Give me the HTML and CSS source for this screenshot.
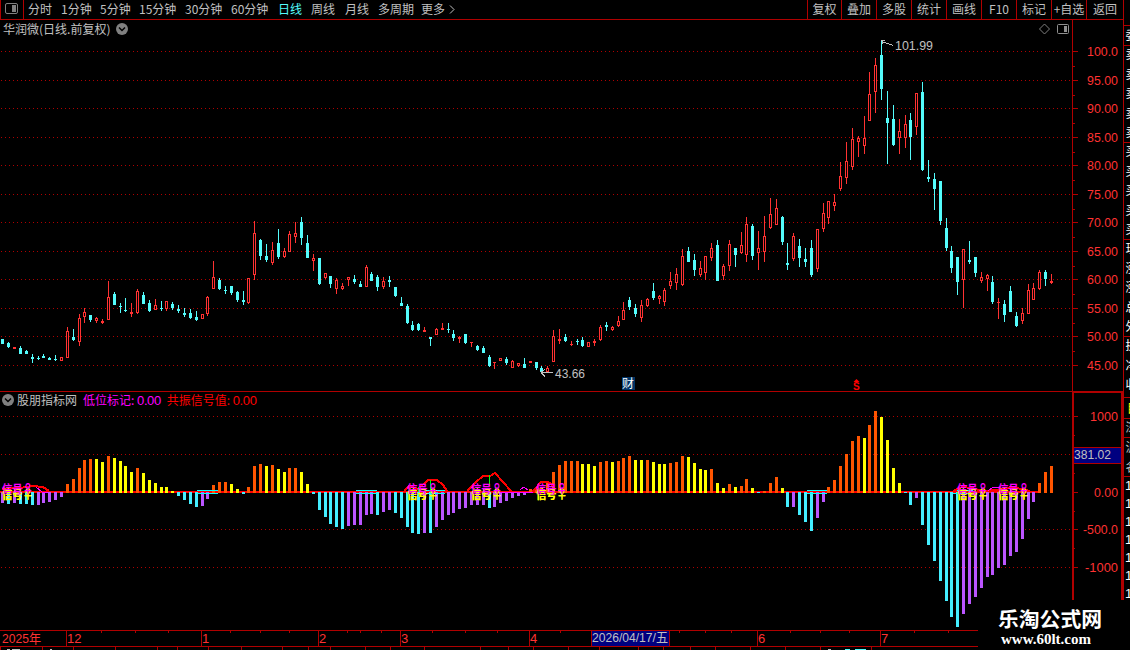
FILE: index.html
```
<!doctype html>
<html lang="zh">
<head>
	<meta charset="utf-8">
	<title>华润微 日线</title>
	<link rel="stylesheet" href="styles.css">
</head>
<body>
<div class="app">
	<div class="main">
		<!-- top toolbar -->
		<div class="toolbar">
			<div class="side-toggle">
				<svg width="13" height="11" viewBox="0 0 13 11"><rect x=".5" y=".5" width="12" height="10" rx="1.5" fill="none" stroke="#808080"/><rect x="7" y="2" width="4" height="7" fill="#808080"/></svg>
			</div>
			<div class="periods">
				<span>分时</span><span>1分钟</span><span>5分钟</span><span>15分钟</span><span>30分钟</span><span>60分钟</span><span class="active">日线</span><span>周线</span><span>月线</span><span>多周期</span><span>更多<svg class="more" width="6" height="9" viewBox="0 0 6 9"><path d="M1 .5l4 4-4 4" fill="none" stroke="#c0c0c0"/></svg></span>
			</div>
			<div class="tools">
				<span>复权</span><span>叠加</span><span>多股</span><span>统计</span><span>画线</span><span>F10</span><span>标记</span><span>+自选</span><span>返回</span>
			</div>
		</div>

		<!-- price chart -->
		<div class="panel price">
			<div class="plot">
				<div class="title">
					<span>华润微(日线.前复权)</span>
					<svg class="drop" width="12" height="12" viewBox="0 0 12 12"><circle cx="6" cy="6" r="6" fill="#808080"/><path d="M3 4.5l3 3 3-3" fill="none" stroke="#000" stroke-width="1.5"/></svg>
					<svg class="corner" width="32" height="12" viewBox="0 0 32 12"><path d="M6.500 1l5 5-5 5-5-5z" fill="none" stroke="#808080"/><rect x="19.500" y="1.500" width="11" height="9" rx="1" fill="none" stroke="#909090"/><rect x="26" y="3" width="3" height="6" fill="#909090"/></svg>
				</div>
				<svg id="price" width="1072" height="351" viewBox="0 40 1072 351"></svg>
			</div>
			<svg id="priceAxis" class="axis" width="51" height="371" viewBox="1072 20 51 371"></svg>
		</div>

		<!-- indicator -->
		<div class="panel indicator">
			<div class="plot">
				<div class="title">
					<svg class="dot" width="12" height="12" viewBox="0 0 12 12"><circle cx="6" cy="6" r="6" fill="#808080"/><path d="M3 4.500l3 3 3-3" fill="none" stroke="#000" stroke-width="1.5"/></svg>
					<span class="name">股朋指标网</span>
					<span class="low">低位标记: <b>0.00</b></span>
					<span class="res">共振信号值: <b>0.00</b></span>
				</div>
				<svg id="macd" width="1072" height="221" viewBox="0 409 1072 221"></svg>
			</div>
			<svg id="macdAxis" class="axis" width="51" height="239" viewBox="1072 391 51 239"></svg>
		</div>

		<svg id="dates" width="1123" height="20" viewBox="0 630 1123 20"></svg>
	</div>
	<svg id="quotes" class="quotes" width="7" height="650" viewBox="1123 0 7 650"></svg>
	<div class="watermark">
		<div class="site">乐淘公式网</div>
		<div class="url">www.60lt.com</div>
	</div>
</div>
<script src="chart.js"></script>
</body>
</html>
```
FILE: styles.css
```
body {
	margin: 0;
	background: #000;
	color: #c0c0c0;
	font-family: "Noto Sans CJK SC", "Liberation Sans", sans-serif;
	font-size: 12px;
	overflow: hidden;
}
svg { display: block; }
.app {
	position: relative;
	display: flex;
	width: 1130px;
	height: 650px;
	overflow: hidden;
}
.main { width: 1123px; }

/* toolbar */
.toolbar {
	display: flex;
	height: 19px;
	line-height: 18px;
	border-bottom: 1px solid #b00000;
	white-space: nowrap;
}
.side-toggle {
	box-sizing: border-box;
	width: 24px;
	padding: 3px 0 0 4px;
	border-left: 1px solid #b00000;
	border-right: 1px solid #b00000;
}
.periods {
	display: grid;
	grid-template-columns: 33px 39px 39px 46px 46px 47px 33px 34px 33px 43px 40px;
	padding-left: 4px;
}
.periods .active { color: #54fcfc; }
.more { display: inline-block; margin-left: 4px; }
.tools {
	display: grid;
	grid-template-columns: 34px 35px 35px 35px 35px 35px 35px 35px 37px;
	margin-left: auto;
	text-align: center;
}
.tools span { border-left: 1px solid #b00000; }

/* chart panels */
.panel { display: flex; }
.price { height: 371px; }
.indicator { height: 239px; }
.plot { width: 1072px; }
.title {
	display: flex;
	align-items: center;
	box-sizing: border-box;
	line-height: 16px;
	white-space: nowrap;
}
.price .title { height: 20px; padding: 0 2px 2px 3px; }
.drop { margin-left: 6px; }
.corner { margin-left: auto; }
.indicator .title {
	height: 18px;
	padding: 0 0 1px 2px;
	border-top: 1px solid #b00000;
}
.title .name { margin-left: 3px; }
.title b { font: 13px/14px "Liberation Sans", sans-serif; letter-spacing: -.4px; }
.low { margin-left: 6px; color: #f0f; }
.res { margin-left: 6px; color: #f00; }

svg text {
	font-family: "Liberation Sans", "Noto Sans CJK SC", sans-serif;
	font-size: 13px;
	fill: #c0c0c0;
}
svg .red { fill: #ff3232; }
svg .cjk { font-family: "Noto Sans CJK SC", sans-serif; font-size: 12px; }
svg .sig { font-family: "Noto Sans CJK SC", sans-serif; font-size: 12px; font-weight: bold; }
svg .magenta { fill: #f0f; }
svg .yellow { fill: #ff0; }
svg .white { fill: #fff; }
svg .mark { font-size: 10px; font-weight: bold; fill: #f00; }

.watermark {
	position: absolute;
	left: 978px;
	top: 600px;
	width: 152px;
	height: 50px;
	background: #000;
	color: #fff;
}
.site {
	padding: 4px 0 0 20px;
	font-size: 20.8px;
	font-weight: bold;
	line-height: 28px;
}
.url {
	padding-left: 23px;
	font: bold 15px/15px "Liberation Serif", serif;
}
```
FILE: chart.js
```
var RED = '#ff3232', CYAN = '#54fcfc', LINE = '#b00000';

// high, body top, body bottom, low, 1 = up
var candles = [
[339,339,344,344,0],[342,343,347,348,0],[347,347,349,349,1],[346,348,354,354,0],[350,351,354,354,0],
[354,357,359,363,0],[356,358,359,360,0],[354,356,358,358,0],[357,358,360,360,0],[355,359,360,361,0],
[357,357,361,361,1],[327,331,358,358,1],[329,337,340,341,0],[314,318,342,346,1],[308,312,317,323,1],
[315,315,320,322,0],[317,318,321,323,1],[319,321,323,324,1],[281,297,320,320,1],[292,294,305,305,0],
[303,306,307,313,0],[298,310,311,312,0],[303,312,314,317,1],[289,291,313,314,1],[292,295,304,304,0],
[300,303,311,312,0],[299,305,310,310,1],[301,308,309,311,0],[301,301,309,311,1],[302,304,308,310,0],
[305,309,311,313,0],[308,313,315,317,0],[309,313,318,319,0],[311,317,320,321,0],[314,314,319,319,1],
[296,297,314,316,1],[261,277,289,289,1],[278,280,289,290,0],[286,290,291,294,0],[286,286,293,295,0],
[291,292,300,302,0],[291,300,302,305,0],[278,278,303,304,1],[221,233,275,280,1],[239,240,256,260,0],
[244,256,260,262,0],[242,250,263,265,1],[229,243,257,259,0],[248,251,257,258,1],[231,234,252,252,1],
[222,233,237,243,1],[217,222,238,245,0],[235,243,258,258,0],[254,258,261,271,1],[258,258,284,285,0],
[273,273,278,279,1],[276,276,284,288,0],[278,280,289,294,1],[283,286,289,290,1],[277,277,280,286,1],
[275,279,282,284,0],[281,284,287,287,0],[265,267,287,287,1],[272,274,281,281,0],[275,277,287,291,0],
[277,281,287,289,1],[276,280,282,287,0],[287,287,296,297,0],[297,303,306,306,0],[304,306,323,324,0],
[321,325,330,331,0],[323,324,330,331,0],[327,330,332,332,1],[337,337,339,346,0],[328,329,335,335,1],
[323,328,330,330,1],[323,329,330,333,0],[330,334,338,341,0],[336,337,339,343,1],[334,334,343,344,0],
[342,342,343,347,1],[345,346,350,351,0],[346,348,353,353,0],[355,357,366,367,0],[362,362,363,369,1],
[358,358,361,361,1],[357,359,363,365,0],[360,361,368,368,1],[363,363,366,367,1],[358,364,368,368,0],
[361,361,363,363,1],[362,362,368,370,0],[366,368,372,372,0],[366,368,372,372,1],[330,336,362,362,1],
[329,339,341,344,1],[334,337,341,342,0],[341,344,345,346,1],[339,341,342,345,0],[337,340,346,347,0],
[342,342,347,347,1],[339,341,343,346,1],[325,327,340,341,1],[322,325,327,331,0],[326,327,330,331,1],
[316,321,326,327,1],[302,310,320,320,1],[297,300,307,310,0],[304,308,314,317,0],[300,305,318,322,1],
[298,299,306,307,1],[283,291,298,300,0],[295,296,299,304,1],[288,290,302,306,1],[272,281,286,289,1],
[268,274,283,290,1],[249,256,285,286,1],[247,251,262,262,0],[254,260,270,276,0],[261,268,275,277,1],
[256,256,273,280,1],[243,248,258,261,1],[240,245,281,281,0],[264,266,276,280,1],[240,244,266,271,1],
[248,248,255,267,0],[232,245,253,254,1],[217,224,255,262,1],[224,226,256,260,0],[231,248,253,270,1],
[216,236,252,262,1],[198,214,228,229,1],[199,208,225,225,1],[216,217,242,245,0],[243,263,265,270,0],
[233,236,259,261,1],[239,246,258,267,0],[248,259,262,267,0],[240,248,275,277,0],[229,229,269,272,1],
[203,213,229,232,1],[201,201,218,224,1],[194,202,206,211,1],[162,176,189,191,1],[142,161,178,184,1],
[128,139,167,170,1],[136,138,142,157,1],[116,138,146,154,1],[72,94,121,121,1],[58,65,92,113,1],
[40,55,89,100,0],[91,118,123,164,0],[105,119,145,146,0],[119,131,138,154,1],[115,124,138,148,1],
[113,120,137,160,0],[93,93,127,135,1],[82,92,170,171,0],[160,177,179,182,0],[173,179,189,210,0],
[181,181,221,225,0],[218,228,248,251,0],[246,251,268,273,0],[257,257,282,295,0],[249,249,280,308,1],
[241,260,262,264,0],[257,257,273,277,0],[272,277,281,283,1],[274,275,279,291,1],[276,282,302,304,0],
[298,302,303,319,1],[300,304,315,322,0],[286,291,312,312,0],[312,316,326,327,0],[308,313,321,324,1],
[284,290,314,314,1],[283,288,300,300,1],[270,272,289,290,1],[270,272,279,286,0],[274,281,283,284,1]
];

// histogram: colour letter + end of the bar
var bars = ('p503 c504 p503 c504 c504 c505 p505 p503 p502 p500 p497 o484 o479 o468 o460 o459 y459 y462 o456 y458 ' +
'y461 y466 y472 o468 y473 y480 y483 y487 y487 y491 c496 c500 c504 c507 p506 p499 o485 o482 o482 y484 ' +
'y489 c494 o487 o466 o464 y466 o465 y469 y472 o468 o468 y472 y484 c494 c510 c517 c524 c527 c529 p526 ' +
'p525 p525 p515 p514 c515 p512 p510 c513 c518 c527 c533 c534 p533 c533 p527 p520 p515 p513 p509 p508 ' +
'p505 p505 p505 c508 p507 p503 p501 p498 p496 p495 o489 o489 o487 o482 o472 o465 o461 o461 o461 y464 ' +
'y464 y466 o462 o461 y462 o461 o458 o456 y460 y460 o460 y462 y464 y464 o463 o462 o456 y457 y463 y469 ' +
'y470 o469 y483 y488 o484 y487 o486 o479 y488 c493 o491 o483 o477 y488 c507 p507 c515 c522 c531 p518 ' +
'p502 o487 o480 o466 o454 o441 o436 y438 o425 o411 y417 y440 y468 y483 c493 c505 p498 c525 c545 c561 ' +
'c581 c601 c617 c627 p614 p604 p597 p588 p577 p575 p568 p565 p556 p552 p539 p519 p502 o483 o472 o466').split(' ');
var barColors = { o: '#ff5500', y: '#ffff00', c: '#44eeff', p: '#bb55ff' };

function cx(i) { return Math.floor(2.925 + i * 5.858); }

function rect(x, y, w, h, c) {
	return '<rect x="' + x + '" y="' + y + '" width="' + w + '" height="' + h + '" fill="' + c + '"/>';
}
function text(x, y, s, cls, len) {
	return '<text x="' + x + '" y="' + y + '" class="' + (cls || '') + '"' +
		(len ? ' textLength="' + len + '" lengthAdjust="spacingAndGlyphs"' : '') + '>' + s + '</text>';
}
function path(d, c, w) {
	return '<path d="' + d + '" fill="none" stroke="' + c + '" stroke-width="' + (w || 1) + '" shape-rendering="crispEdges"/>';
}
function grid(ys) {
	return ys.map(function (y) {
		return '<path d="M1 ' + (y + .5) + 'H1072" stroke="' + LINE + '" stroke-dasharray="1 3"/>';
	}).join('');
}
function put(id, s) { document.getElementById(id).innerHTML = s; }

var priceYs = [51, 80, 108, 137, 165, 194, 222, 251, 279, 308, 336, 365];

// price chart
var s = grid(priceYs);
candles.forEach(function (k, i) {
	var x = cx(i), c = k[4] ? RED : CYAN;
	s += rect(x, k[0], 1, k[3] - k[0], c);
	s += rect(x - 1, k[1], 3, k[2] - k[1], c);
	if (k[4] && k[2] - k[1] > 2) s += rect(x, k[1] + 1, 1, k[2] - k[1] - 2, '#000');
});
s += path('M882 41.500L893 45.500M881 40.500H885M882 39V44', '#c0c0c0');
s += text(895, 50, '101.99', '', 38);
s += path('M541 372.500H553M541 372.500L545 369.500M541 372.500L545 376.500', '#c0c0c0');
s += text(555, 378, '43.66', '', 30);
s += rect(622, 377, 13, 13, '#003366') + text(622, 388, '财', 'cjk white');
s += '<path d="M853.500 382L856.500 379L859.500 382z" fill="#f00"/>';
s += text(853, 390, 'S', 'mark');
put('price', s);

// price axis
s = rect(1072, 20, 1, 371, LINE);
priceYs.forEach(function (y, n) {
	var v = 100 - n * 5;
	s += rect(1072, y, 6, 1, LINE);
	if (n < 11) s += rect(1072, y + 15, 3, 1, LINE);
	s += text(1087, y + 5, n ? v + '.00' : '100.0', 'red', 31);
});
put('priceAxis', s);

// indicator
s = grid([416, 454, 529, 567]);
s += rect(0, 491, 1040, 2, '#f00');
bars.forEach(function (b, i) {
	var y = +b.slice(1), up = b[0] == 'o' || b[0] == 'y';
	s += rect(cx(i) - 1, up ? y : 492, 3, up ? 493 - y : y - 492, barColors[b[0]]);
});
[[197, 21], [356, 21], [426, 19], [807, 20], [953, 20]].forEach(function (l) {
	s += rect(l[0], 490, l[1], 1, '#0ff') + rect(l[0], 493, l[1], 1, '#0ff');
});
s += path('M2 489L20 488L32 486L43 487L49 491', '#f00', 2);
s += path('M404 491L409 486L418 489L428 480H437L443 485L447 491', '#f00', 2);
s += path('M467 491L476 482L483 476H490L495 473L503 482L511 491', '#f00', 2);
s += path('M533 491L541 482H548L554 486', '#f00', 2);
s += path('M953 491L962 487L972 488L982 491L997 490L1012 487L1030 491', '#f00', 2);
s += path('M430.500 480V492M489.500 475V486M418.500 487V492', '#0f0');
s += path('M36 487L42 492H48M500 492.500H533M520 490L524 487L528 490M988 491L993 487H1000', '#f0f');
[2, 407, 471, 536, 957, 998].forEach(function (x) {
	s += text(x, 499, '信号♀', 'sig yellow', 31);
	s += text(x, 494, '信号♀', 'sig magenta', 31);
	// lower half of the yellow label stays in front
	s += '<g clip-path="inset(0)"><svg x="' + x + '" y="494" width="32" height="8" viewBox="0 494 32 8">' +
		text(0, 499, '信号♀', 'sig yellow', 31) + '</svg></g>';
});
put('macd', s);

// indicator axis
s = rect(1072, 391, 2, 239, LINE) + rect(1121, 391, 2, 239, LINE) + rect(1072, 391, 51, 2, LINE);
[416, 492, 529, 567].forEach(function (y) { s += rect(1073, y, 5, 1, LINE); });
[435, 473, 511, 548].forEach(function (y) { s += rect(1073, y, 2, 1, LINE); });
s += rect(1074, 447, 48, 17, LINE) + rect(1074, 448, 47, 15, '#000080');
s += text(1074, 459, '381.02', '', 37);
s += text(1090, 421, '1000', 'red', 28) + text(1094, 497, '0.00', 'red', 24);
s += text(1083, 534, '-500.0', 'red', 35) + text(1085, 572, '-1000', 'red', 33);
put('macdAxis', s);

// date axis
s = rect(0, 630, 1123, 1, LINE) + rect(0, 646, 1123, 1, LINE);
[66, 201, 318, 400, 529, 757, 880].forEach(function (x, n) {
	s += rect(x, 630, 1, 17, LINE);
	s += text(x + 1, 643, ['12', '1', '2', '3', '4', '6', '7'][n], 'red');
});
[101, 135, 168, 230, 260, 289, 347, 360, 381, 432, 465, 497, 560, 679, 705, 731, 790, 820, 849, 914, 948].forEach(function (x) {
	s += rect(x, 631, 1, 2, LINE);
});
s += text(2, 643, '2025年', 'red', 39);
s += rect(591, 631, 79, 15, '#000080') + rect(591, 631, 1, 15, LINE) + rect(669, 631, 1, 15, LINE);
s += text(592, 642, '2026/04/17/五', '', 76);
[0, 42, 73, 115, 157, 177, 208, 241, 282, 308, 330, 365, 390, 424, 480, 508, 533, 568, 599, 638, 663, 690, 715, 750, 785, 820, 871].forEach(function (x) {
	s += rect(x, 646, 1, 4, LINE);
});
s += rect(7, 649, 3, 1, '#c0c0c0') + rect(12, 649, 8, 1, '#c0c0c0') + rect(50, 649, 2, 1, '#c0c0c0');
s += rect(828, 649, 3, 1, '#c0c0c0') + rect(845, 649, 5, 1, CYAN) + rect(855, 649, 11, 1, CYAN);
put('dates', s);

// quote strip, cut by the window edge
s = rect(1123, 0, 1, 650, LINE);
[25, 45, 142, 239, 336, 397, 418, 437, 476].forEach(function (y) { s += rect(1123, y, 7, 1, LINE); });
'委卖卖卖卖卖买买买买买现涨涨总外换净收'.split('').forEach(function (c, i) {
	s += text(1125.5, 40 + i * 19.4, c, 'cjk white');
});
s += text(1127, 413, '目', 'cjk yellow') + text(1125.5, 432, '深', 'cjk') + text(1125.5, 452, '沪', 'cjk') + text(1125.5, 472, '名', 'cjk');
for (var i = 0; i < 7; i++) s += text(1125, 490 + i * 18, '1', 'white');
put('quotes', s);
```
